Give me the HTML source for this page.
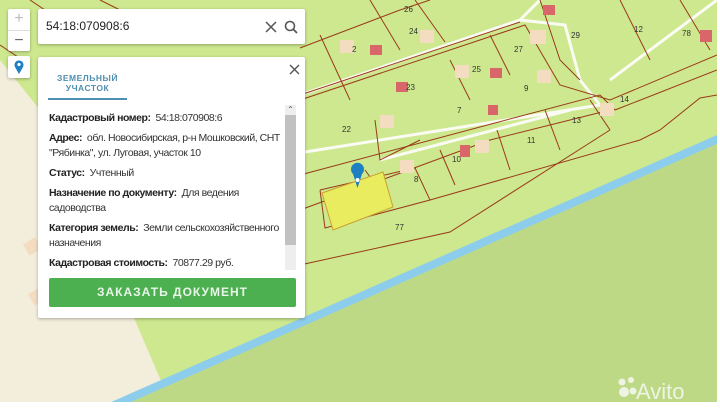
<!DOCTYPE html><html><head><meta charset="utf-8"><style>
body{margin:0;width:720px;height:414px;overflow:hidden;position:relative;font-family:"Liberation Sans",sans-serif;background:#fff}
.map{position:absolute;left:0;top:0;width:717px;height:402px;background:#f3eddc;overflow:hidden}
.box{position:absolute;background:#fff;box-shadow:0 1px 3px rgba(0,0,0,.3);border-radius:2px}
.p{position:absolute;left:49px;font-size:10.5px;color:#333;line-height:15px;white-space:nowrap;letter-spacing:-0.45px}
.p b{color:#222}
</style></head><body>
<div class="map">
<svg width="717" height="402" style="position:absolute;left:0;top:0">
<polygon points="0,0 717,0 717,402 170,402 105,250 40,110 0,60" fill="#cde88e"/>
<polygon points="125,402 717,142 717,402" fill="#bed985"/>
<line x1="112" y1="406" x2="720" y2="138" stroke="#8dcdec" stroke-width="8"/>
<g stroke="#fff" stroke-width="3" fill="none" opacity=".9">
<polyline points="300,95 520,20 540,0"/><polyline points="305,152 600,105"/>
<polyline points="520,20 565,25 580,80 600,105"/><polyline points="610,80 717,0"/>
<polyline points="380,160 570,110"/>
</g>
<g stroke="#9a3a1a" stroke-width="1" fill="none">
<polyline points="300,48 400,10 430,0"/><polyline points="300,95 520,22"/><polyline points="300,100 525,25 560,85 610,100 717,55"/>
<polyline points="300,175 600,95 615,110 717,70"/><polyline points="300,210 490,140 610,110"/><polyline points="375,120 380,160 400,150 420,140"/>
<polyline points="320,190 415,168 430,200 325,228 320,190"/><polyline points="430,200 640,140 660,130 700,98 717,95"/>
<polyline points="300,265 450,232 610,130"/><polyline points="365,170 392,207"/><polyline points="440,150 455,185"/><polyline points="497,130 510,170"/><polyline points="545,110 560,150"/><polyline points="590,100 610,130"/>
<polyline points="320,35 350,100"/><polyline points="370,0 400,50"/><polyline points="415,0 445,42"/><polyline points="450,60 470,100"/><polyline points="490,35 510,75"/><polyline points="540,0 560,60 580,80"/><polyline points="620,0 650,60"/><polyline points="680,0 710,50"/>
<polyline points="30,0 60,20"/><polyline points="100,0 120,10"/><polyline points="0,45 30,65"/>
</g>
<polygon points="322,193 383,172 393,207 333,230" fill="#e8ec5e" stroke="#c9a030"/>
<g fill="#f4dcc0"><rect x="530" y="30" width="16" height="14"/><rect x="380" y="115" width="14" height="13"/><rect x="455" y="65" width="14" height="13"/><rect x="537" y="70" width="14" height="13"/><rect x="600" y="103" width="14" height="13"/><rect x="400" y="160" width="14" height="13"/><rect x="475" y="140" width="14" height="13"/><rect x="420" y="30" width="14" height="13"/><rect x="340" y="40" width="14" height="13"/><rect x="25" y="240" width="14" height="13" transform="rotate(-30 32 246)"/><rect x="30" y="290" width="14" height="13" transform="rotate(-30 37 296)"/></g>
<g fill="#d9676a"><rect x="370" y="45" width="12" height="10"/><rect x="396" y="82" width="12" height="10"/><rect x="490" y="68" width="12" height="10"/><rect x="460" y="145" width="10" height="12"/><rect x="543" y="5" width="12" height="10"/><rect x="700" y="30" width="12" height="12"/><rect x="488" y="105" width="10" height="10"/></g>
<g font-size="8" fill="#333" font-family="Liberation Sans"><text x="352" y="52">2</text><text x="406" y="90">23</text><text x="472" y="72">25</text><text x="514" y="52">27</text><text x="524" y="91">9</text><text x="457" y="113">7</text><text x="342" y="132">22</text><text x="527" y="143">11</text><text x="572" y="123">13</text><text x="620" y="102">14</text><text x="414" y="182">8</text><text x="452" y="162">10</text><text x="571" y="38">29</text><text x="634" y="32">12</text><text x="682" y="36">78</text><text x="404" y="12">26</text><text x="409" y="34">24</text><text x="395" y="230">77</text></g>
<g font-family="Liberation Sans" font-size="22" fill="#eef4e4"><text x="636" y="399">Avito</text></g>
<g fill="#eef4e4"><circle cx="622" cy="382" r="3.5"/><circle cx="631" cy="380" r="3"/><circle cx="624" cy="392" r="5"/><circle cx="633" cy="391" r="3.5"/></g>
<path d="M357,174 a6.5,6.5 0 1,1 9,0 l-4.5,14 z" fill="#1e7fc3" transform="translate(-4,0)"/>
<circle cx="357.5" cy="180" r="2" fill="#fff"/>
</svg>
</div>
<div class="box" style="left:8px;top:9px;width:22px;height:42px;">
<div style="position:absolute;left:0;top:0;width:22px;height:21px;text-align:center;line-height:20px;color:#bbb;font-size:16px">+</div>
<div style="position:absolute;left:0;top:21px;width:22px;border-top:1px solid #ddd;height:20px;text-align:center;line-height:19px;color:#666;font-size:16px">−</div></div>
<div class="box" style="left:8px;top:56px;width:22px;height:22px">
<svg width="22" height="22"><path d="M11,18 L7,11 a4.5,4.5 0 1,1 8,0 z" fill="#1e7fc3"/><circle cx="11" cy="8.5" r="1.6" fill="#fff"/></svg></div>
<div class="box" style="left:38px;top:9px;width:267px;height:35px">
<div style="position:absolute;left:8px;top:10px;font-size:12px;color:#222">54:18:070908:6</div>
<svg style="position:absolute;left:226px;top:10px" width="38" height="16"><path d="M2,3 L12,13 M12,3 L2,13" stroke="#555" stroke-width="1.5"/><circle cx="26" cy="7" r="4.5" stroke="#555" stroke-width="1.6" fill="none"/><path d="M29,10 L33,14" stroke="#555" stroke-width="1.8"/></svg></div>
<div class="box" style="left:38px;top:57px;width:267px;height:261px">
<svg style="position:absolute;left:250px;top:6px" width="14" height="14"><path d="M2,2 L11,11 M11,2 L2,11" stroke="#555" stroke-width="1.4"/></svg>
<div style="position:absolute;left:10px;top:16px;width:79px;text-align:center;font-size:8.5px;font-weight:bold;color:#4f8fb0;letter-spacing:.5px;line-height:10px">ЗЕМЕЛЬНЫЙ<br>УЧАСТОК</div>
<div style="position:absolute;left:10px;top:41px;width:79px;height:2px;background:#4f8fb0"></div>
<div style="position:absolute;left:247px;top:48px;width:11px;height:165px;background:#eee"><div style="position:absolute;top:10px;width:11px;height:130px;background:#c1c1c1"></div><div style="position:absolute;top:0;width:11px;text-align:center;font-size:8px;color:#555">⌃</div></div>
</div>
<div class="p" style="top:111px"><b>Кадастровый номер:</b>&nbsp; 54:18:070908:6</div>
<div class="p" style="top:131px"><b>Адрес:</b>&nbsp; обл. Новосибирская, р-н Мошковский, СНТ<br>"Рябинка", ул. Луговая, участок 10</div>
<div class="p" style="top:166px"><b>Статус:</b>&nbsp; Учтенный</div>
<div class="p" style="top:186px"><b>Назначение по документу:</b>&nbsp; Для ведения<br>садоводства</div>
<div class="p" style="top:221px"><b>Категория земель:</b>&nbsp; Земли сельскохозяйственного<br>назначения</div>
<div class="p" style="top:256px"><b>Кадастровая стоимость:</b>&nbsp; 70877.29 руб.</div>
<div style="position:absolute;left:49px;top:278px;width:247px;height:29px;background:#4caf50;border-radius:2px;color:#e8f5e8;font-weight:bold;font-size:12px;letter-spacing:1px;text-align:center;line-height:29px">ЗАКАЗАТЬ ДОКУМЕНТ</div>
</body></html>
